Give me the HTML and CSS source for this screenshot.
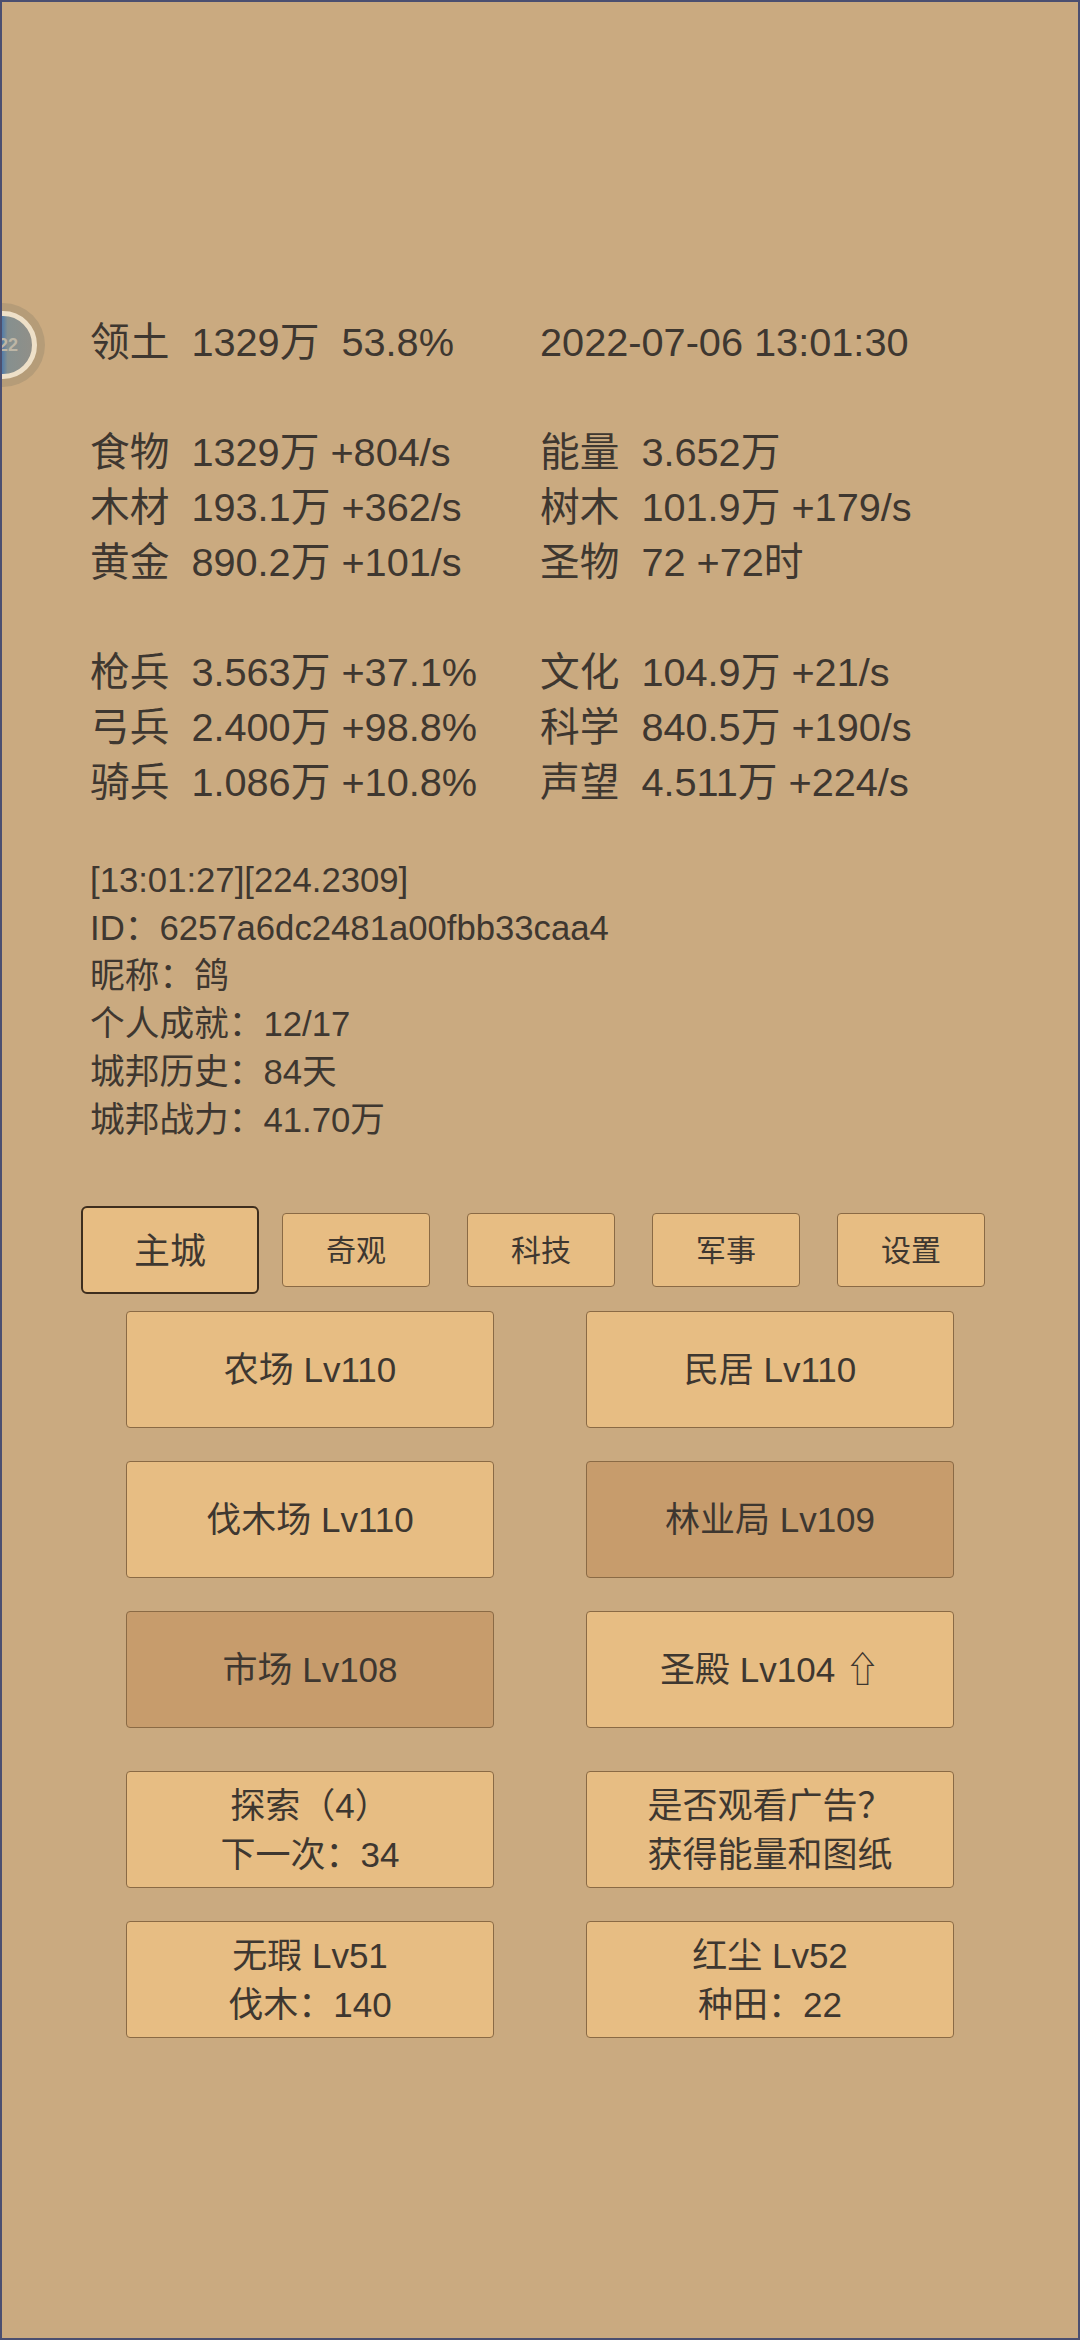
FILE: index.html
```html
<!DOCTYPE html>
<html lang="en">
<head>
    <meta charset="UTF-8">
    <meta name="viewport" content="width=device-width, initial-scale=1.0">
    <title>城邦</title>
    <link rel="stylesheet" href="styles.css">
</head>
<body>
    <div class="floatBall"><div class="ballFace">22</div></div>
    <div class="container">
        <div class="stats">
            <div class="stat"><span>领土</span><span>1329万&nbsp;&nbsp;53.8%</span></div>
            <div class="stat"><span>2022-07-06 13:01:30</span></div>
        </div>
        <div class="stats">
            <div class="stat"><span>食物</span><span>1329万 +804/s</span></div>
            <div class="stat"><span>能量</span><span>3.652万</span></div>
            <div class="stat"><span>木材</span><span>193.1万 +362/s</span></div>
            <div class="stat"><span>树木</span><span>101.9万 +179/s</span></div>
            <div class="stat"><span>黄金</span><span>890.2万 +101/s</span></div>
            <div class="stat"><span>圣物</span><span>72 +72时</span></div>
        </div>
        <div class="stats">
            <div class="stat"><span>枪兵</span><span>3.563万 +37.1%</span></div>
            <div class="stat"><span>文化</span><span>104.9万 +21/s</span></div>
            <div class="stat"><span>弓兵</span><span>2.400万 +98.8%</span></div>
            <div class="stat"><span>科学</span><span>840.5万 +190/s</span></div>
            <div class="stat"><span>骑兵</span><span>1.086万 +10.8%</span></div>
            <div class="stat"><span>声望</span><span>4.511万 +224/s</span></div>
        </div>
        <div class="info">
            <div>[13:01:27][224.2309]</div>
            <div>ID：6257a6dc2481a00fbb33caa4</div>
            <div>昵称：鸽</div>
            <div>个人成就：12/17</div>
            <div>城邦历史：84天</div>
            <div>城邦战力：41.70万</div>
        </div>
        <div class="tabs">
            <button class="tab active">主城</button>
            <button class="tab">奇观</button>
            <button class="tab">科技</button>
            <button class="tab">军事</button>
            <button class="tab">设置</button>
        </div>
        <div class="buildings">
            <button class="building">农场 Lv110</button>
            <button class="building">民居 Lv110</button>
            <button class="building">伐木场 Lv110</button>
            <button class="building busy">林业局 Lv109</button>
            <button class="building busy">市场 Lv108</button>
            <button class="building">圣殿 Lv104 ⇧</button>
        </div>
        <div class="buildings actions">
            <button class="building">探索（4）<br>下一次：34</button>
            <button class="building">是否观看广告？<br>获得能量和图纸</button>
            <button class="building">无瑕 Lv51<br>伐木：140</button>
            <button class="building">红尘 Lv52<br>种田：22</button>
        </div>
    </div>
</body>
</html>
```

FILE: styles.css
```css
* {
    box-sizing: border-box;
}
body {
    position: relative;
    height: 2340px;
    margin: 0;
    overflow: hidden;
    border: 2px solid #4b4f70;
    background-color: #caaa80;
    color: #3e3730;
    font-family: "Liberation Sans", "Noto Sans CJK SC", sans-serif;
}
.container {
    padding: 313px 0 0 88px;
}
.stats {
    display: grid;
    grid-template-columns: 450px 1fr;
    margin-bottom: 55px;
    font-size: 39.7px;
    line-height: 55px;
}
.stat {
    display: flex;
    gap: 22px;
    white-space: nowrap;
}
.info {
    margin-top: -9px;
    font-size: 34.7px;
    line-height: 48px;
}
.tabs {
    display: flex;
    align-items: center;
    gap: 37px;
    margin: 62px 0 17px -9px;
}
button {
    padding: 0;
    border: 1px solid #8a6a45;
    border-radius: 4px;
    background-color: #e7bd83;
    color: #3e3730;
    font-family: inherit;
    cursor: pointer;
}
.tab {
    width: 148px;
    height: 74px;
    padding-bottom: 5px;
    font-size: 30px;
}
.tab.active {
    width: 178px;
    height: 88px;
    margin-right: -14px;
    border: 2px solid #3e2e1e;
    border-radius: 6px;
    font-size: 36px;
}
.buildings {
    display: grid;
    grid-template-columns: 368px 368px;
    grid-auto-rows: 117px;
    gap: 33px 92px;
    margin-left: 36px;
}
.actions {
    margin-top: 43px;
}
.building {
    font-size: 35px;
    line-height: 49px;
}
.building.busy {
    background-color: #c79c6c;
}
.floatBall {
    position: absolute;
    top: 301px;
    left: -41px;
    width: 84px;
    height: 84px;
    padding: 8px;
    border-radius: 50%;
    background-color: #b59c78;
}
.ballFace {
    width: 68px;
    height: 68px;
    padding-right: 14px;
    border: 5px solid #eee0c8;
    border-radius: 50%;
    background: linear-gradient(90deg, #4f7bab 48%, #86908f 58%, #908f88);
    color: #bdb6a6;
    font-size: 18px;
    font-weight: bold;
    line-height: 58px;
    text-align: right;
}
```
